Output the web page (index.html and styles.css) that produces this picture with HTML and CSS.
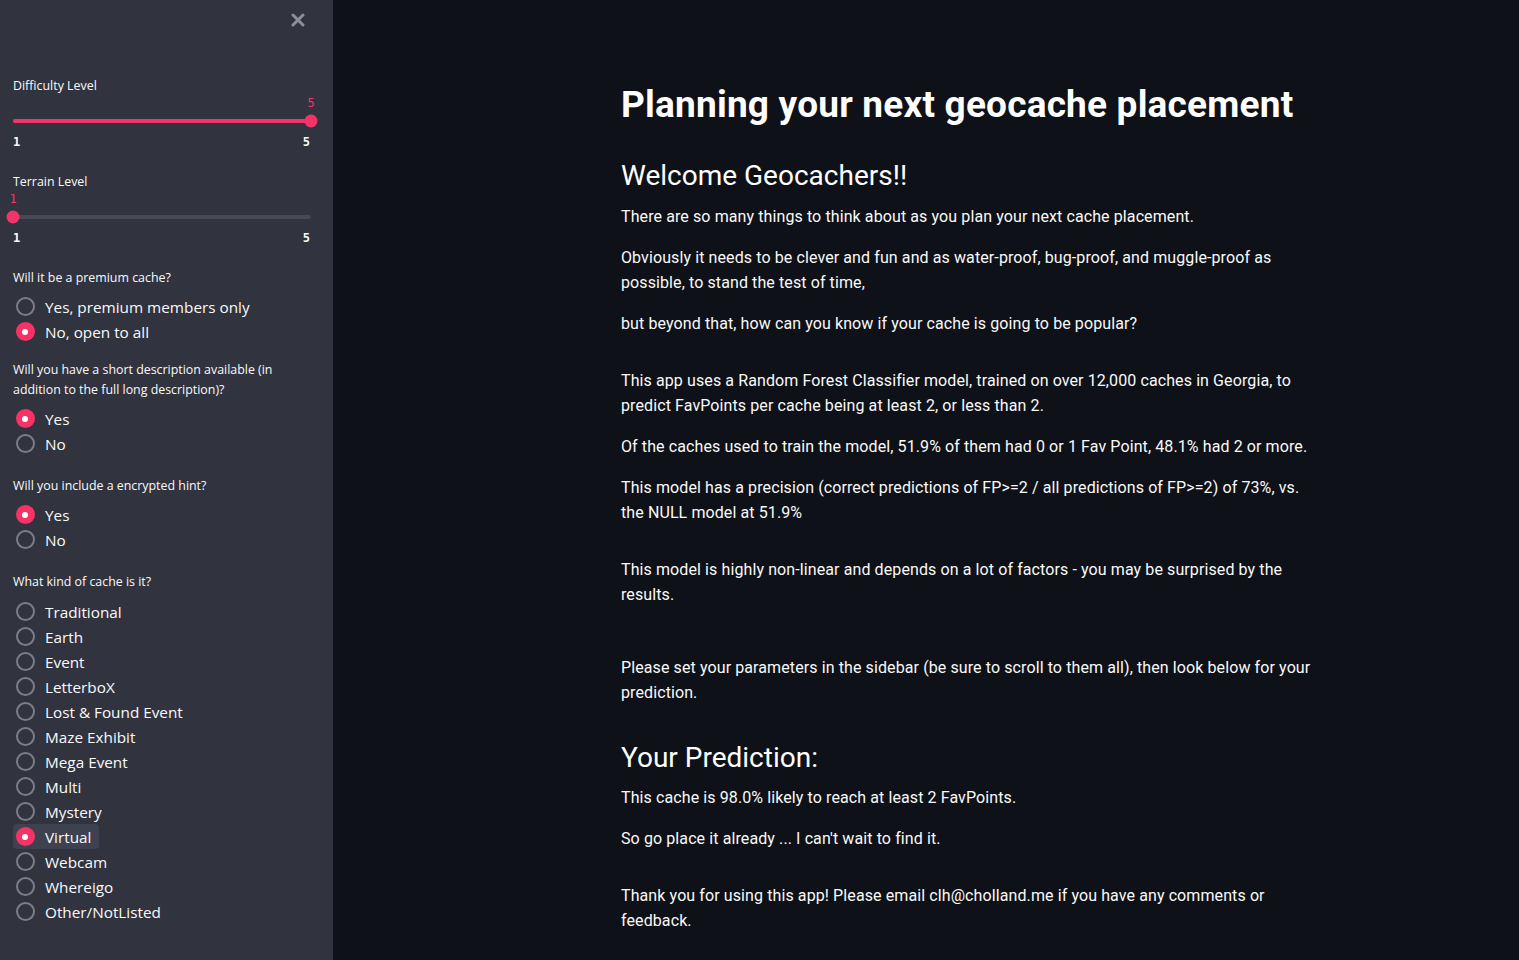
FILE: index.html
```html
<!DOCTYPE html>
<html lang="en">
<head>
<meta charset="utf-8">
<title>Planning your next geocache placement</title>
<link rel="stylesheet" href="styles.css">
</head>
<body>
<div class="app">
  <aside class="sidebar">
    <div class="close-row">
      <svg class="close" width="14" height="14" viewBox="0 0 14 14"><path d="M2 2 L12 12 M12 2 L2 12" stroke="#8d8f9a" stroke-width="3" stroke-linecap="round"/></svg>
    </div>

    <div class="widget slider">
      <div class="label">Difficulty Level</div>
      <div class="value-row"><span class="value" style="left:100%">5</span></div>
      <div class="track-row">
        <div class="track"><div class="fill" style="width:100%"></div><div class="thumb" style="left:100%"></div></div>
      </div>
      <div class="ticks"><span>1</span><span>5</span></div>
    </div>

    <div class="widget slider">
      <div class="label">Terrain Level</div>
      <div class="value-row"><span class="value" style="left:0%">1</span></div>
      <div class="track-row">
        <div class="track"><div class="fill" style="width:0%"></div><div class="thumb" style="left:0%"></div></div>
      </div>
      <div class="ticks"><span>1</span><span>5</span></div>
    </div>

    <div class="widget radio">
      <div class="label">Will it be a premium cache?</div>
      <div class="options">
        <div class="opt"><span class="dot"></span><span>Yes, premium members only</span></div>
        <div class="opt on"><span class="dot"></span><span>No, open to all</span></div>
      </div>
    </div>

    <div class="widget radio tight">
      <div class="label">Will you have a short description available (in addition to the full long description)?</div>
      <div class="options">
        <div class="opt on"><span class="dot"></span><span>Yes</span></div>
        <div class="opt"><span class="dot"></span><span>No</span></div>
      </div>
    </div>

    <div class="widget radio">
      <div class="label">Will you include a encrypted hint?</div>
      <div class="options">
        <div class="opt on"><span class="dot"></span><span>Yes</span></div>
        <div class="opt"><span class="dot"></span><span>No</span></div>
      </div>
    </div>

    <div class="widget radio">
      <div class="label">What kind of cache is it?</div>
      <div class="options last">
        <div class="opt"><span class="dot"></span><span>Traditional</span></div>
        <div class="opt"><span class="dot"></span><span>Earth</span></div>
        <div class="opt"><span class="dot"></span><span>Event</span></div>
        <div class="opt"><span class="dot"></span><span>LetterboX</span></div>
        <div class="opt"><span class="dot"></span><span>Lost &amp; Found Event</span></div>
        <div class="opt"><span class="dot"></span><span>Maze Exhibit</span></div>
        <div class="opt"><span class="dot"></span><span>Mega Event</span></div>
        <div class="opt"><span class="dot"></span><span>Multi</span></div>
        <div class="opt"><span class="dot"></span><span>Mystery</span></div>
        <div class="opt on focus"><span class="dot"></span><span>Virtual</span></div>
        <div class="opt"><span class="dot"></span><span>Webcam</span></div>
        <div class="opt"><span class="dot"></span><span>Whereigo</span></div>
        <div class="opt"><span class="dot"></span><span>Other/NotListed</span></div>
      </div>
    </div>
  </aside>

  <main class="main">
    <div class="content">
      <h1>Planning your next geocache placement</h1>
      <h2>Welcome Geocachers!!</h2>
      <p>There are so many things to think about as you plan your next cache placement.</p>
      <p>Obviously it needs to be clever and fun and as water-proof, bug-proof, and muggle-proof as possible, to stand the test of time,</p>
      <p>but beyond that, how can you know if your cache is going to be popular?</p>
      <p class="gap1">This app uses a Random Forest Classifier model, trained on over 12,000 caches in Georgia, to predict FavPoints per cache being at least 2, or less than 2.</p>
      <p>Of the caches used to train the model, 51.9% of them had 0 or 1 Fav Point, 48.1% had 2 or more.</p>
      <p>This model has a precision (correct predictions of FP&gt;=2 / all predictions of FP&gt;=2) of 73%, vs. the NULL model at 51.9%</p>
      <p class="gap1">This model is highly non-linear and depends on a lot of factors - you may be surprised by the results.</p>
      <p class="gap2">Please set your parameters in the sidebar (be sure to scroll to them all), then look below for your prediction.</p>
      <h2 class="pred">Your Prediction:</h2>
      <p>This cache is 98.0% likely to reach at least 2 FavPoints.</p>
      <p>So go place it already ... I can't wait to find it.</p>
      <p class="gap1">Thank you for using this app! Please email clh@cholland.me if you have any comments or feedback.</p>
    </div>
  </main>
</div>
</body>
</html>
```

FILE: styles.css
```css
* { box-sizing: border-box; }
html, body { margin: 0; padding: 0; height: 100%; }
body {
  background: #0e1117;
  color: #fafafa;
  font-family: "Open Sans", "Liberation Sans", sans-serif;
  overflow: hidden;
}
.app {
  display: flex;
  height: 960px;
}
.sidebar {
  width: 333px;
  flex: 0 0 333px;
  background: #31333f;
  padding: 0 22px 0 13px;
  display: flex;
  flex-direction: column;
}
.close-row {
  height: 76px;
  display: flex;
  justify-content: flex-end;
  align-items: flex-start;
  padding-top: 13px;
  padding-right: 6px;
}
.widget { margin-bottom: 20px; }
.widget.tight { margin-top: -4px; }
.label {
  font-size: 12.4px;
  line-height: 20px;
  color: #fafafa;
}
.value-row {
  position: relative;
  height: 14px;
}
.value {
  position: absolute;
  top: 0;
  transform: translateX(-50%);
  font-size: 12px;
  line-height: 14px;
  color: #f63366;
  font-family: "DejaVu Sans Mono", monospace;
}
.track-row {
  height: 22px;
  display: flex;
  align-items: center;
}
.track {
  position: relative;
  width: 100%;
  height: 4px;
  border-radius: 2px;
  background: #474956;
}
.fill {
  height: 4px;
  border-radius: 2px;
  background: #f63366;
}
.thumb {
  position: absolute;
  top: 50%;
  width: 13px;
  height: 13px;
  border-radius: 50%;
  background: #f63366;
  transform: translate(-50%, -50%);
}
.ticks {
  height: 20px;
  display: flex;
  justify-content: space-between;
  align-items: center;
  font-size: 12px;
  font-weight: 700;
  font-family: "DejaVu Sans Mono", monospace;
  color: #fafafa;
  padding-right: 1px;
}
.options {
  margin-top: 6px;
  display: flex;
  flex-direction: column;
  align-items: flex-start;
}
.options.last { margin-top: 7px; }
.opt {
  height: 25px;
  display: inline-flex;
  align-items: center;
  font-size: 15.3px;
  color: #fafafa;
  padding-right: 8px;
  border-radius: 4px;
}
.opt.focus { background: #3e4150; }
.dot {
  width: 19px;
  height: 19px;
  margin-left: 2.5px;
  margin-right: 10.5px;
  border-radius: 50%;
  border: 2px solid #7b7d88;
  flex: 0 0 19px;
  position: relative;
}
.opt.on .dot {
  border-color: #f63366;
  background: #f63366;
}
.opt.on .dot::after {
  content: "";
  position: absolute;
  left: 50%;
  top: 50%;
  width: 6px;
  height: 6px;
  border-radius: 50%;
  background: #fff;
  transform: translate(-50%, -50%);
}

.main {
  flex: 1;
  padding-left: 288px;
  padding-top: 83px;
}
.content {
  width: 696px;
  font-family: Roboto, "Liberation Sans", sans-serif;
}
h1 {
  margin: 0 0 33px;
  font-size: 37px;
  line-height: 43px;
  font-weight: 700;
  letter-spacing: 0.2px;
  color: #ffffff;
}
h2 {
  margin: 0 0 10.5px;
  font-size: 28px;
  line-height: 34px;
  font-weight: 400;
  color: #ffffff;
}
h2.pred { margin-top: 36px; }
p {
  margin: 0 0 16px;
  font-size: 16px;
  line-height: 25px;
  letter-spacing: 0.1px;
  color: #fafafa;
}
p.gap1 { padding-top: 16px; }
p.gap2 { padding-top: 32px; }
```
